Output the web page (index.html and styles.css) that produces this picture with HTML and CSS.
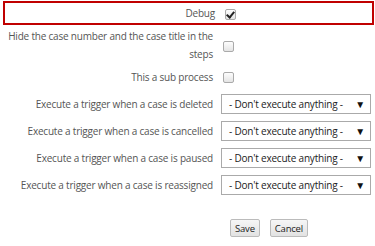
FILE: index.html
```html
<!DOCTYPE html>
<html lang="en">
<head>
    <meta charset="UTF-8">
    <meta name="viewport" content="width=device-width, initial-scale=1.0">
    <title>Process properties</title>
    <link rel="stylesheet" href="styles.css">
</head>
<body>
    <div class="form">
        <div class="row row-debug">
            <label class="label">Debug</label>
            <div class="field"><span class="check checked"></span></div>
        </div>
        <div class="row">
            <label class="label">Hide the case number and the case title in the steps</label>
            <div class="field"><span class="check"></span></div>
        </div>
        <div class="row">
            <label class="label">This a sub process</label>
            <div class="field"><span class="check"></span></div>
        </div>
        <div class="row">
            <label class="label">Execute a trigger when a case is deleted</label>
            <div class="field"><div class="select">- Don't execute anything -<span class="arrow">&#9660;</span></div></div>
        </div>
        <div class="row">
            <label class="label">Execute a trigger when a case is cancelled</label>
            <div class="field"><div class="select">- Don't execute anything -<span class="arrow">&#9660;</span></div></div>
        </div>
        <div class="row">
            <label class="label">Execute a trigger when a case is paused</label>
            <div class="field"><div class="select">- Don't execute anything -<span class="arrow">&#9660;</span></div></div>
        </div>
        <div class="row">
            <label class="label">Execute a trigger when a case is reassigned</label>
            <div class="field"><div class="select">- Don't execute anything -<span class="arrow">&#9660;</span></div></div>
        </div>
        <div class="buttons">
            <button class="btn">Save</button>
            <button class="btn">Cancel</button>
        </div>
    </div>
</body>
</html>
```

FILE: styles.css
```css
body {
    margin: 0;
    font-family: "Open Sans", sans-serif;
    font-size: 10px;
    letter-spacing: -0.2px;
    color: #555;
    background: #fff;
}

.form {
    padding: 1px 1px 0 3px;
}

.row {
    display: grid;
    grid-template-columns: 215px 1fr;
    align-items: center;
    min-height: 27px;
}

.row-debug {
    min-height: 20px;
    border: 2px solid #c00000;
    margin-bottom: 2px;
}

.label {
    text-align: right;
    line-height: 18px;
    margin-left: -3px;
    width: 213px;
}

.field {
    padding-left: 3px;
}

.check {
    display: inline-block;
    margin-left: 2px;
    width: 9px;
    height: 9px;
    border: 1px solid #aaa;
    border-radius: 2px;
    background: linear-gradient(#fdfdfd, #e4e4e4);
    vertical-align: middle;
    position: relative;
}

.checked::after {
    content: "";
    position: absolute;
    left: 2px;
    top: 0;
    width: 3px;
    height: 6px;
    border: solid #222;
    border-width: 0 2px 2px 0;
    transform: rotate(40deg);
}

.select {
    display: flex;
    justify-content: space-between;
    align-items: center;
    white-space: nowrap;
    width: 150px;
    height: 20px;
    margin-top: 1px;
    border: 1px solid #aaa;
    padding: 0 5px 0 7px;
    box-sizing: border-box;
    color: #222;
}

.arrow {
    font-size: 10px;
    color: #111;
}

.buttons {
    padding: 21px 0 0 227px;
    display: flex;
    gap: 10px;
}

.btn {
    font-family: "Open Sans", sans-serif;
    font-size: 9.5px;
    letter-spacing: -0.2px;
    color: #222;
    height: 18px;
    background: linear-gradient(#f6f6f6, #e2e2e2);
    border: 1px solid #bbb;
    border-radius: 2px;
    padding: 0 4px;
}
```
